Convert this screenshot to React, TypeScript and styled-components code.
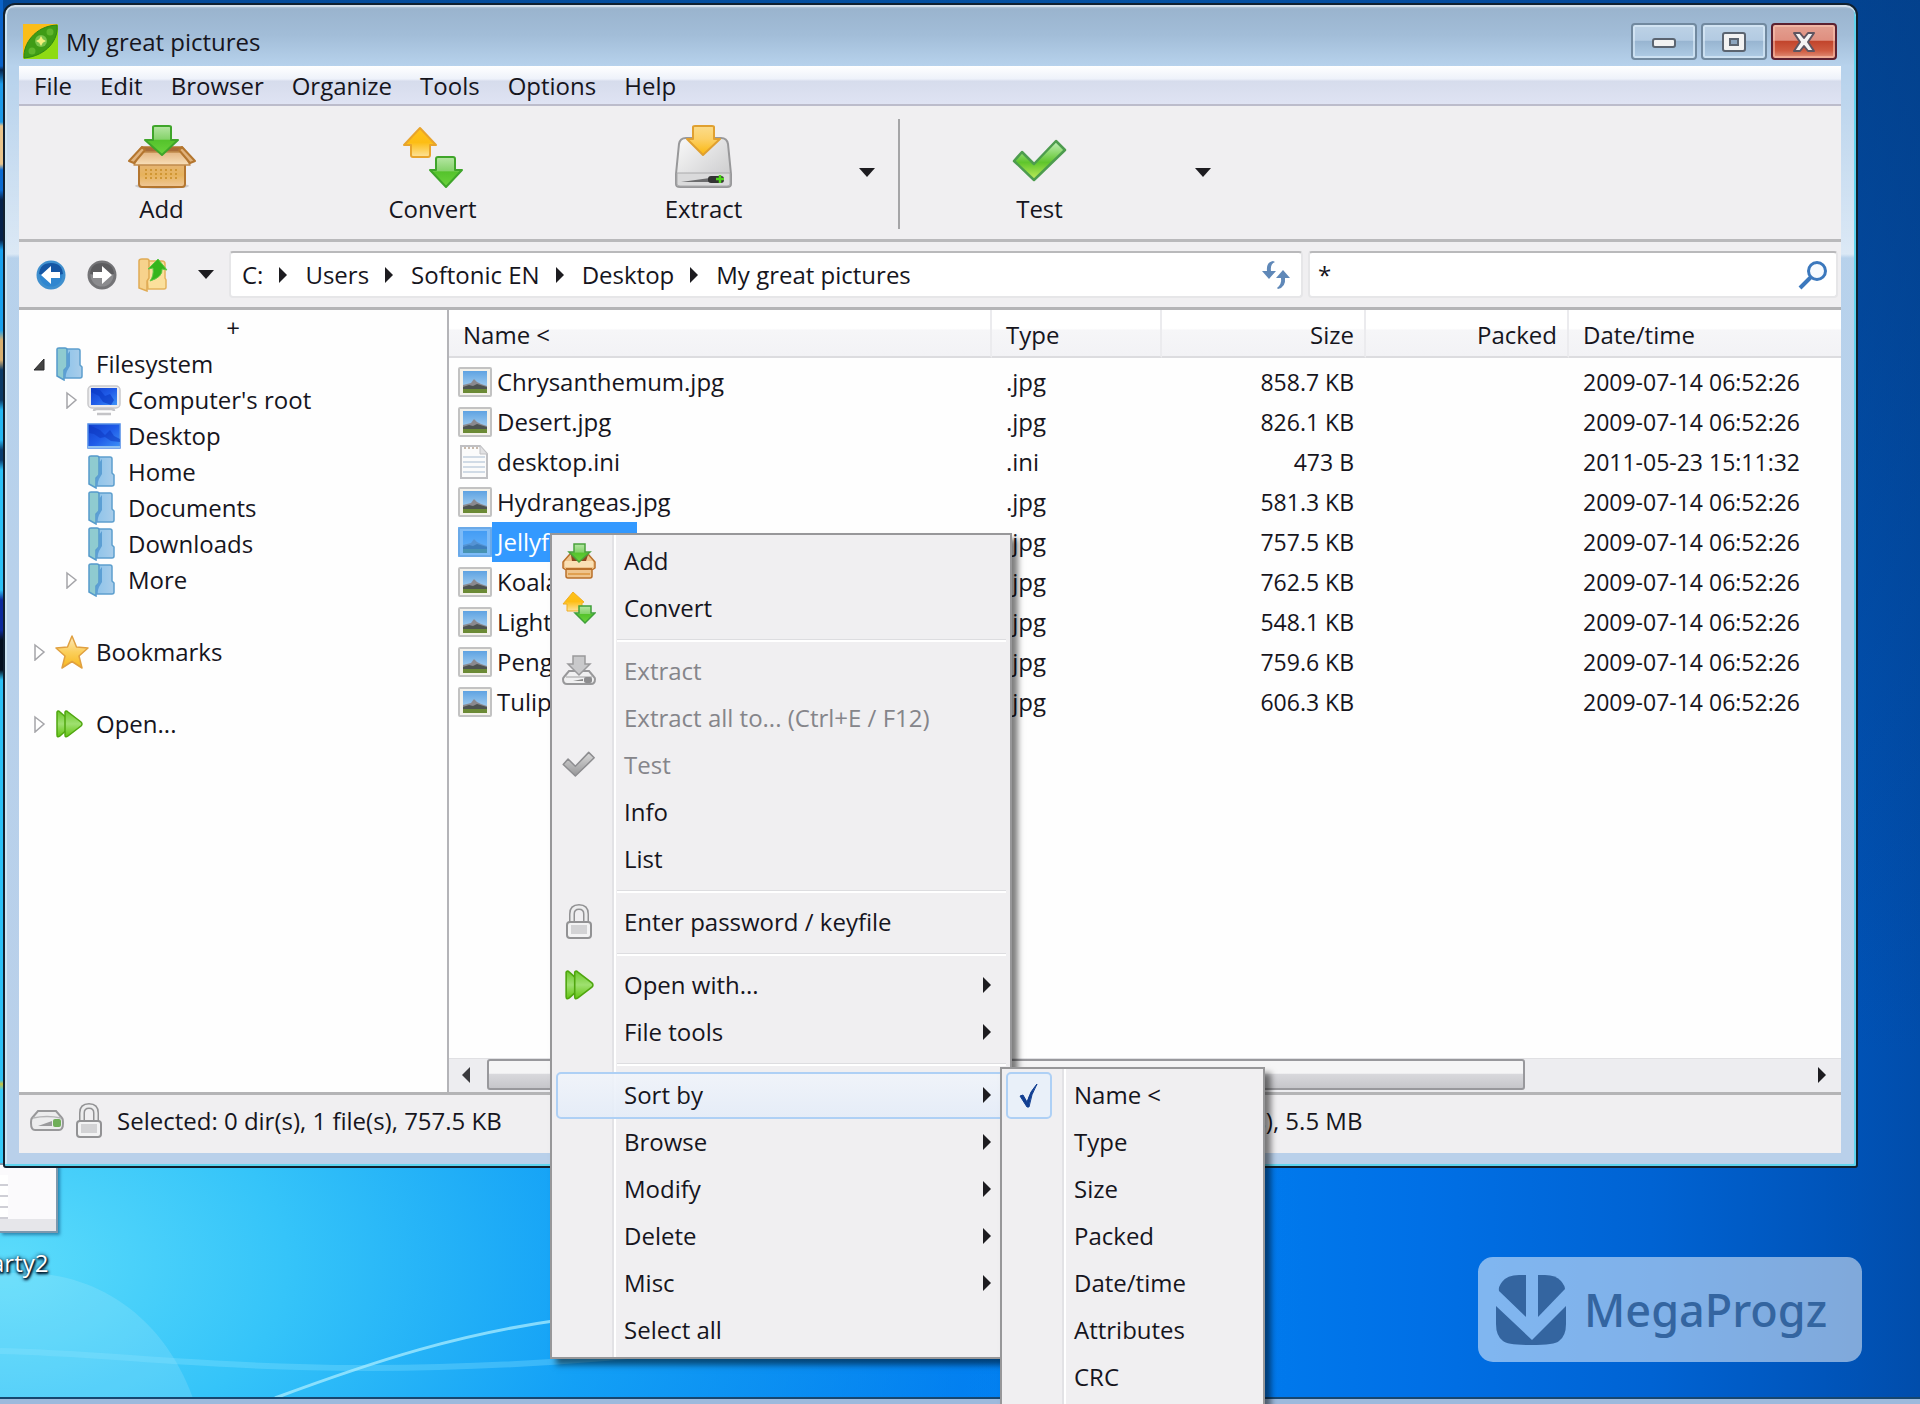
import React from "react";
import styled, { createGlobalStyle, css } from "styled-components";

const GlobalStyle = createGlobalStyle`
  * { box-sizing: border-box; }
  body { margin: 0; }
  body, button, input, table {
    font-family: "Open Sans", "Noto Sans", sans-serif;
    font-size: 24px;
    line-height: 32px;
    color: #16151d;
  }
  button {
    border: 0;
    padding: 0;
    background: none;
    text-align: left;
    white-space: nowrap;
  }
  svg { display: block; flex: none; }
`;

/* ---------- desktop ---------- */

const Desktop = styled.div`
  position: relative;
  display: flex;
  flex-direction: column;
  height: 100vh;
  padding: 3px 62px 236px 3px;
  overflow: hidden;
  background:
    radial-gradient(ellipse 68% 60% at 0% 90%, #5cdcfb 0%, #35c4f9 22%, rgba(22, 168, 250, 0.85) 46%, rgba(4, 132, 244, 0.5) 75%, rgba(0, 110, 230, 0) 100%),
    linear-gradient(90deg, #0568cf 0%, #0080f2 60%, #0070e6 74%, #0063d3 86%, #0055bb 95%, #014dab 100%);
`;

const TopShade = styled.div`
  position: absolute;
  inset: 0 0 auto 0;
  height: 75%;
  background: linear-gradient(180deg, rgba(4, 60, 128, 0.7), rgba(4, 60, 128, 0));
`;

const EdgeStrip = styled.div`
  position: absolute;
  left: 0;
  top: 0;
  width: 3px;
  height: 1168px;
  background: linear-gradient(
    180deg,
    #0a62c8 0 66px, #06264f 70px, #1d9ae8 84px 122px, #e9c58c 126px 164px,
    #0a6ad0 170px 190px, #06224a 200px 240px, #18a0ee 250px 330px, #d9b070 340px 360px,
    #0c3a66 370px 400px, #25b6f2 410px 440px, #0a3d70 450px 460px, #2cc0f6 470px 590px,
    #0c2a9c 600px 630px, #04101f 640px 670px, #2cc0f6 680px 1080px, #c9c33c 1084px, #35caf8 1090px
  );
`;

const Aurora = styled.svg`
  position: absolute;
  left: 0;
  bottom: 0;
`;

const Thumbnail = styled.div`
  position: absolute;
  left: 0;
  bottom: 171px;
  width: 58px;
  height: 70px;
  border: 2px solid #7d98ad;
  border-left: 0;
  background:
    linear-gradient(#e6e6ea, #e6e6ea) 0 100% / 100% 12px no-repeat,
    repeating-linear-gradient(180deg, #ffffff 0 9px, #cfcfd6 9px 11px) 0 10px / 8px 44px no-repeat,
    #fbfafc;
  box-shadow: 2px 2px 3px rgba(0, 60, 110, 0.5);
`;

const ThumbnailLabel = styled.div`
  position: absolute;
  left: -9px;
  bottom: 125px;
  color: #fff;
  text-shadow: 1px 2px 3px #001830, 0 0 4px #00264a, 1px 1px 2px #000;
`;

const Taskbar = styled.div`
  position: absolute;
  left: 0;
  right: 0;
  bottom: 0;
  height: 7px;
  border-top: 2px solid #16466f;
  background: #9db9dc;
`;

/* ---------- window chrome ---------- */

const Window = styled.main`
  position: relative;
  display: flex;
  flex-direction: column;
  flex: 1;
  min-height: 0;
  padding: 0 15px 13px 14px;
  border: 2px solid #10202f;
  border-radius: 12px 12px 3px 3px;
  background:
    linear-gradient(180deg, rgba(255, 255, 255, 0) 66px, rgba(255, 255, 255, 0.5) 249px, rgba(255, 255, 255, 0) 253px),
    linear-gradient(180deg, #c3d3e2 0, #9ab4ce 4px, #a2bdd8 30px, #b7d2ec 61px, #b9d0ea 100%);
  box-shadow: inset 0 2px 0 #d3e0ec, inset -2px -2px 0 #5fd4ee, inset 2px 0 0 #cfe6f4;
`;

const TitleBar = styled.header`
  display: flex;
  align-items: center;
  height: 61px;
  padding: 12px 4px 0;
  gap: 8px;
`;

const Title = styled.h1`
  flex: 1;
  margin: 0;
  font-size: 24px;
  font-weight: 400;
`;

const Controls = styled.div`
  display: flex;
  align-items: center;
  gap: 4px;
`;

const ControlButton = styled.button<{ $close?: boolean }>`
  display: flex;
  align-items: center;
  justify-content: center;
  width: 66px;
  height: 37px;
  border: 2px solid ${(p) => (p.$close ? "#5c2130" : "#71899f")};
  border-radius: 4px;
  background: ${(p) =>
    p.$close
      ? "linear-gradient(180deg, #e3a091 0, #df8f80 46%, #c2452c 50%, #cf5c42 78%, #e2917a 100%)"
      : "linear-gradient(180deg, #bdd2e6 0, #b3cbe2 46%, #98b5d1 50%, #b0cde6 100%)"};
  box-shadow: inset 0 0 0 2px ${(p) => (p.$close ? "rgba(255,205,185,.5)" : "rgba(225,240,252,.6)")};
`;

const Client = styled.div`
  display: flex;
  flex-direction: column;
  flex: 1;
  min-height: 0;
  background: #f0eff1;
`;

const MenuBar = styled.nav`
  display: flex;
  flex: none;
  height: 40px;
  padding-left: 1px;
  border-bottom: 2px solid #bcbccb;
  background: linear-gradient(180deg, #ffffff 0, #eef2fa 34%, #d6dcec 40%, #dfe3f3 100%);
`;

const MenuBarItem = styled.button`
  padding: 2px 14px 0;
`;

const ToolBar = styled.div`
  display: flex;
  flex: none;
  height: 136px;
  padding-left: 7px;
  border-bottom: 3px solid #b9b9bb;
`;

const ToolButton = styled.button`
  display: flex;
  flex-direction: column;
  align-items: center;
  width: 271px;
  padding-top: 19px;
  gap: 4px;
`;

const DropButton = styled.button<{ $wide?: boolean }>`
  display: flex;
  align-items: center;
  justify-content: center;
  width: ${(p) => (p.$wide ? "56px" : "34px")};
  margin-right: ${(p) => (p.$wide ? "0" : "6px")};
`;

const ToolDivider = styled.div`
  width: 2px;
  height: 110px;
  margin: 13px 4px 0 3px;
  background: #a5a5a7;
`;

const AddressRow = styled.div`
  display: flex;
  flex: none;
  align-items: center;
  height: 68px;
  padding: 0 3px 0 17px;
  border-bottom: 3px solid #b4b4b6;
`;

const NavButton = styled.button`
  width: 51px;
`;

const field = css`
  display: flex;
  align-items: center;
  height: 47px;
  border: 2px solid #e6e6e8;
  border-top-color: #b9b9bb;
  border-radius: 4px;
  background: #fff;
`;

const Breadcrumb = styled.div`
  ${field}
  flex: 1;
  padding: 0 10px 0 11px;
`;

const Crumb = styled.button`
  display: flex;
  align-items: center;
  gap: 15px;
  margin-right: 17px;
`;

const RefreshButton = styled.button`
  margin-left: auto;
`;

const SearchBox = styled.form`
  ${field}
  width: 530px;
  margin-left: 5px;
  padding: 0 8px;
`;

const SearchInput = styled.input`
  flex: 1;
  min-width: 0;
  border: 0;
  padding: 0;
  outline: 0;
  background: none;
`;

/* ---------- panes ---------- */

const Panes = styled.div`
  display: flex;
  flex: 1;
  min-height: 0;
  background: #fefefe;
`;

const Sidebar = styled.aside`
  flex: none;
  width: 430px;
  padding-top: 2px;
  border-right: 2px solid #b4b4b8;
`;

const AddTab = styled.button`
  display: block;
  width: 100%;
  text-align: center;
`;

const Tree = styled.ul`
  margin: 0;
  padding: 2px 0 0;
  list-style: none;
`;

const TreeRow = styled.li<{ $level: number; $gap?: boolean }>`
  display: grid;
  grid-template-columns: 23px 41px 1fr;
  align-items: center;
  height: 36px;
  margin-top: ${(p) => (p.$gap ? "36px" : "0")};
  padding-left: ${(p) => (p.$level ? "45px" : "13px")};
`;

const FilePane = styled.section`
  display: flex;
  flex-direction: column;
  flex: 1;
  min-width: 0;
`;

const FileTable = styled.table`
  width: 100%;
  table-layout: fixed;
  border-collapse: separate;
  border-spacing: 0;
  tbody::before {
    content: "";
    display: block;
    height: 4px;
  }
`;

const Head = styled.th<{ $w?: number; $right?: boolean }>`
  width: ${(p) => (p.$w ? `${p.$w}px` : "auto")};
  height: 48px;
  padding: 3px ${(p) => (p.$right ? "10px" : "0")} 0 14px;
  border-right: 2px solid #ebebee;
  border-bottom: 2px solid #dcdcdf;
  background: linear-gradient(180deg, #ffffff 0 40%, #f6f6f8 44%, #f2f2f5 100%);
  font-weight: 400;
  text-align: ${(p) => (p.$right ? "right" : "left")};
  &:last-child { border-right: 0; }
`;

const Cell = styled.td<{ $right?: boolean; $name?: boolean; $num?: boolean }>`
  height: 40px;
  padding: 0 ${(p) => (p.$right ? "12px" : "0")} 0 ${(p) => (p.$name ? "9px" : "14px")};
  font-size: ${(p) => (p.$num ? "23px" : "24px")};
  text-align: ${(p) => (p.$right ? "right" : "left")};
  white-space: nowrap;
`;

const FileName = styled.div`
  display: flex;
  align-items: center;
`;

const FileLabel = styled.span<{ $selected?: boolean }>`
  padding: 0 16px 0 5px;
  line-height: 40px;
  color: ${(p) => (p.$selected ? "#fff" : "inherit")};
  background: ${(p) => (p.$selected ? "#3399ff" : "none")};
`;

const ScrollBar = styled.div`
  display: flex;
  align-items: flex-start;
  height: 34px;
  margin-top: auto;
  padding: 0 14px 0 12px;
  border-top: 1px solid #e0e0e3;
  background: #ededf0;
  svg { margin-top: 8px; }
`;

const Track = styled.div`
  flex: 1;
  height: 31px;
  margin: 0 16px;
`;

const Thumb = styled.div`
  width: 79%;
  height: 31px;
  border: 2px solid #98989c;
  border-radius: 3px;
  background: linear-gradient(180deg, #f5f5f6 0 45%, #d8d8dc 50%, #c6c6ca 100%);
`;

const StatusBar = styled.footer`
  display: flex;
  flex: none;
  align-items: center;
  height: 61px;
  padding: 0 0 6px 11px;
  border-top: 3px solid #b4b4b6;
`;

const StatusIcons = styled.div`
  display: flex;
  align-items: center;
  gap: 11px;
  width: 87px;
`;

const StatusText = styled.span<{ $w?: number }>`
  flex: none;
  width: ${(p) => (p.$w ? `${p.$w}px` : "auto")};
`;

/* ---------- popup menus ---------- */

const Popup = styled.div<{ $x: number; $y: number; $w: number }>`
  position: absolute;
  left: ${(p) => p.$x}px;
  top: ${(p) => p.$y}px;
  width: ${(p) => p.$w}px;
  padding: 3px 4px;
  border: 2px solid #979799;
  background: linear-gradient(90deg, transparent 60px, #e2e2e5 60px 62px, #fff 62px 64px, transparent 64px), #f0eff1;
  box-shadow: 6px 6px 6px rgba(0, 0, 0, 0.5);
`;

const MenuItem = styled.button<{ $active?: boolean }>`
  display: grid;
  grid-template-columns: 66px 1fr 22px;
  align-items: center;
  width: 100%;
  height: 47px;
  padding-bottom: 2px;
  border: 2px solid ${(p) => (p.$active ? "#aed0f5" : "transparent")};
  border-radius: 5px;
  background: ${(p) => (p.$active ? "linear-gradient(180deg, rgba(240,244,250,.9), rgba(228,236,248,.9))" : "none")};
  &:disabled { color: #85858a; }
`;

const MenuIcon = styled.span`
  display: flex;
  justify-content: center;
  width: 42px;
`;

const Checked = styled.span`
  display: flex;
  align-items: center;
  justify-content: center;
  width: 46px;
  height: 47px;
  margin: -2px 0 -4px -2px;
  border: 2px solid #aed0f5;
  border-radius: 5px;
  background: #e9f0f9;
`;

const MenuRule = styled.hr`
  height: 3px;
  margin: 7px 0 6px 61px;
  border: 0;
  border-top: 1px solid #dddde0;
  border-bottom: 2px solid #fff;
`;

/* ---------- watermark ---------- */

const Watermark = styled.div`
  position: absolute;
  right: 58px;
  bottom: 42px;
  display: flex;
  align-items: center;
  gap: 17px;
  width: 384px;
  height: 105px;
  padding: 0 17px;
  border-radius: 15px;
  background: rgba(255, 255, 255, 0.5);
  color: #3465a0;
  font-family: "Noto Sans", "Open Sans", sans-serif;
  font-size: 45px;
  font-weight: 500;
`;

/* ---------- drawings ---------- */

const Defs = () => (
  <svg width="0" height="0" style={{ position: "absolute" }} aria-hidden="true">
    <defs>
      <linearGradient id="green" x1="0" y1="0" x2="0" y2="1">
        <stop offset="0" stopColor="#b6e6a4" /><stop offset=".45" stopColor="#86d36c" /><stop offset=".5" stopColor="#55c32c" /><stop offset="1" stopColor="#6bd33c" />
      </linearGradient>
      <linearGradient id="gold" x1="0" y1="0" x2="0" y2="1">
        <stop offset="0" stopColor="#ffc21a" /><stop offset=".5" stopColor="#fdbd14" /><stop offset="1" stopColor="#fde39c" />
      </linearGradient>
      <linearGradient id="goldDown" x1="0" y1="0" x2="0" y2="1">
        <stop offset="0" stopColor="#fbdc8c" /><stop offset=".45" stopColor="#fcd066" /><stop offset="1" stopColor="#fbb70c" />
      </linearGradient>
      <linearGradient id="carton" x1="0" y1="0" x2="0" y2="1">
        <stop offset="0" stopColor="#e6b676" /><stop offset=".5" stopColor="#e6b25c" /><stop offset="1" stopColor="#f0c898" />
      </linearGradient>
      <linearGradient id="flap" x1="0" y1="0" x2="0" y2="1">
        <stop offset="0" stopColor="#e3b684" /><stop offset="1" stopColor="#f8dfb8" />
      </linearGradient>
      <linearGradient id="drive" x1="0" y1="0" x2="1" y2="1">
        <stop offset="0" stopColor="#fafafa" /><stop offset="1" stopColor="#c6c6c8" />
      </linearGradient>
      <linearGradient id="tick" x1="0" y1="0" x2="0" y2="1">
        <stop offset="0" stopColor="#c4f0bc" /><stop offset=".55" stopColor="#5fc52c" /><stop offset="1" stopColor="#c4ee5c" />
      </linearGradient>
      <linearGradient id="tickGrey" x1="0" y1="0" x2="0" y2="1">
        <stop offset="0" stopColor="#dadada" /><stop offset="1" stopColor="#969698" />
      </linearGradient>
      <linearGradient id="sky" x1="0" y1="0" x2="0" y2="1">
        <stop offset="0" stopColor="#5fa3e2" /><stop offset="1" stopColor="#b8dbf3" />
      </linearGradient>
      <linearGradient id="glass" x1="0" y1="0" x2="1" y2="0">
        <stop offset="0" stopColor="#8cc3ea" /><stop offset="1" stopColor="#a9cdea" />
      </linearGradient>
      <linearGradient id="screen" x1="0" y1="0" x2="1" y2="1">
        <stop offset="0" stopColor="#1240cc" /><stop offset=".5" stopColor="#1f5be8" /><stop offset="1" stopColor="#3f93f8" />
      </linearGradient>
      <linearGradient id="star" x1="0" y1="0" x2="0" y2="1">
        <stop offset="0" stopColor="#fdeac0" /><stop offset=".5" stopColor="#fbcf5c" /><stop offset="1" stopColor="#f8b81c" />
      </linearGradient>
      <linearGradient id="play" x1="0" y1="0" x2="0" y2="1">
        <stop offset="0" stopColor="#6cc82c" /><stop offset=".5" stopColor="#9fe070" /><stop offset="1" stopColor="#62c410" />
      </linearGradient>
    </defs>
  </svg>
);

const AppIcon = () => (
  <svg width="35" height="35" viewBox="0 0 35 35">
    <path d="M0 0h35L0 35z" fill="#fbbd1a" /><path d="M35 0v35H0z" fill="#8edb14" />
    <path d="M1 34C0 20 12 2 34 1c2 14-10 31-33 33z" fill="#3f9c16" stroke="#2f8612" strokeWidth="1" />
    <circle cx="18" cy="17" r="6" fill="#77c24a" /><circle cx="27" cy="8" r="3.5" fill="#5fb52c" /><circle cx="9" cy="27" r="3.5" fill="#5fb52c" />
    <path d="M18 12l1.800 3.200L23 17l-3.200 1.800L18 22l-1.800-3.200L13 17l3.200-1.800z" fill="#f3ef7a" />
  </svg>
);

const AddIcon = () => (
  <svg width="68" height="64" viewBox="0 0 68 64">
    <ellipse cx="34" cy="61" rx="27" ry="3" fill="#00000026" />
    <path d="M11 38h46v21q0 3-3 3H14q-3 0-3-3z" fill="url(#carton)" stroke="#b4762f" strokeWidth="2" />
    <path d="M17 45h35M17 49h35M17 53h35" stroke="#d09634" strokeWidth="2" strokeDasharray="2 3" />
    <path d="M14 22h40l5 6H9z" fill="#a86c38" stroke="#b4762f" strokeWidth="1.500" />
    <path d="M13 27h42l7 13H6z" fill="url(#flap)" stroke="#c08a4c" strokeWidth="1.500" strokeLinejoin="round" />
    <path d="M14 22L1 36l5 2 11-13zM54 22l13 14-5 2-11-13z" fill="#e0b27c" stroke="#b4762f" strokeWidth="2" strokeLinejoin="round" />
    <path d="M25 2q0-1 2-1h14q2 0 2 1v13h7L34 30 17 15h8z" fill="url(#green)" stroke="#3fa52a" strokeWidth="2" strokeLinejoin="round" />
  </svg>
);

const ConvertIcon = () => (
  <svg width="60" height="64" viewBox="0 0 60 64">
    <path d="M17 3l16 17h-6v10q0 2-2 2H10q-2 0-2-2V20H1z" fill="url(#gold)" stroke="#e8a42c" strokeWidth="2" strokeLinejoin="round" />
    <path d="M33 34q0-2 2-2h15q2 0 2 2v11h7L43 62 27 45h6z" fill="url(#green)" stroke="#3fa52a" strokeWidth="2" strokeLinejoin="round" />
  </svg>
);

const ExtractIcon = () => (
  <svg width="57" height="64" viewBox="0 0 57 64">
    <path d="M4 19q1-6 7-6h35q6 0 7 6l3 30v10q0 3-4 3H5q-4 0-4-3V49z" fill="url(#drive)" stroke="#98989a" strokeWidth="2" />
    <path d="M2 48h53v11q0 2-3 2H5q-3 0-3-2z" fill="#dadadb" stroke="#aaaaac" strokeWidth="1" />
    <path d="M6 57h36v-5z" fill="#6c6c6e" /><rect x="33" y="51" width="16" height="7" rx="3" fill="#333" />
    <path d="M45 50v8M41 54h8" stroke="#4fd61c" strokeWidth="2.500" />
    <path d="M18 2q0-1 2-1h17q2 0 2 1v12h6L28 30 12 14h6z" fill="url(#goldDown)" stroke="#e0a030" strokeWidth="2" strokeLinejoin="round" />
  </svg>
);

const TestIcon = ({ width = 56, height = 64, grey = false }: { width?: number; height?: number; grey?: boolean }) => (
  <svg width={width} height={height} viewBox={grey ? "0 14 56 44" : "0 0 56 64"}>
    <path d="M2 36l8-9 12 12 22-23 9 9-31 30z" fill={grey ? "url(#tickGrey)" : "url(#tick)"} stroke={grey ? "#8d8d90" : "#4d9c4e"} strokeWidth="2.500" strokeLinejoin="round" />
  </svg>
);

const SmallAdd = () => (
  <svg width="34" height="36" viewBox="0 0 34 36">
    <path d="M1 19L8 11h18l7 8v6l-3 2v6q0 2-2 2H6q-2 0-2-2v-6l-3-2z" fill="#efc48c" stroke="#b9702a" strokeWidth="1.500" strokeLinejoin="round" />
    <path d="M9 12h17l-2 6H10z" fill="#8a4820" />
    <path d="M3 18h28v6H3z" fill="#fae0b4" />
    <path d="M4 26h26" stroke="#b9702a" strokeWidth="2" /><path d="M6 31h22" stroke="#e0a050" strokeWidth="2" />
    <path d="M12 1h11v8h5L17 19 7 9h5z" fill="url(#green)" stroke="#4aa23c" strokeWidth="1.500" />
  </svg>
);

const SmallConvert = () => (
  <svg width="34" height="34" viewBox="0 0 34 34">
    <path d="M11 1l11 10-2 1v8H5v-7H1z" fill="url(#gold)" stroke="#f0ad22" />
    <path d="M17 15h12v7h4L23 32 13 22h4z" fill="url(#green)" stroke="#3fa03a" strokeWidth="1.500" />
  </svg>
);

const SmallExtract = () => (
  <svg width="34" height="31" viewBox="0 0 34 31">
    <path d="M7 16h20l5 6q1 1 1 2 0 5-4 5H5q-4 0-4-5 0-1 1-2z" fill="#f0f0f1" stroke="#98989a" strokeWidth="2" />
    <path d="M4 22h26" stroke="#bbb" strokeWidth="1.500" /><path d="M11 26h10v-2z" fill="#888" /><rect x="22" y="22" width="8" height="6" rx="2" fill="#8c8c8e" />
    <path d="M11 1h12v8h5L17 20 6 9h5z" fill="#c9c9cb" stroke="#9a9a9c" strokeWidth="1.500" />
  </svg>
);

const DriveIcon = () => (
  <svg width="34" height="22" viewBox="0 0 34 22">
    <path d="M8 1h18l6 7q1 1 1 5 0 7-4 7H5q-4 0-4-7 0-4 1-5z" fill="#ececed" stroke="#98989a" strokeWidth="2" />
    <path d="M3 8q14-3 28 0" stroke="#b4b4b6" strokeWidth="1.500" fill="none" /><path d="M8 16h14v-5z" fill="#9a9a9c" />
    <rect x="23" y="9" width="8" height="8" rx="2" fill="#6fae58" />
  </svg>
);

const LockIcon = () => (
  <svg width="28" height="36" viewBox="0 0 28 36">
    <path d="M7 18V10q0-7 7-7t7 7v8" fill="none" stroke="#929294" strokeWidth="6" />
    <path d="M7 18V10q0-7 7-7t7 7v8" fill="none" stroke="#ededee" strokeWidth="3" />
    <rect x="2" y="18" width="24" height="16" rx="3" fill="#f3f3f4" stroke="#929294" strokeWidth="2" />
    <rect x="6" y="21" width="16" height="9" fill="#d3d3d5" />
  </svg>
);

const ForwardGreen = ({ size = 28 }: { size?: number }) => (
  <svg width={size} height={size} viewBox="0 0 28 28">
    <path d="M2 2q1-2 3 0l11 10q2 2 0 4L5 26q-3 2-3-1z" fill="url(#play)" stroke="#4fa60f" strokeWidth="1.500" />
    <path d="M10 2q1-2 3 0l13 10q2 2 0 4L13 26q-3 2-3-1z" fill="url(#play)" stroke="#4fa60f" strokeWidth="1.500" />
  </svg>
);

const FolderGlass = () => (
  <svg width="28" height="34" viewBox="0 0 28 34">
    <path d="M8 2h15q2 0 2 2v14l2 2v9q0 2-2 2H10z" fill="url(#glass)" stroke="#5d9fce" strokeWidth="1.500" />
    <path d="M2 2q0-1 2-1h6q2 0 2 2v17l-3 3v10l-7-4z" fill="#8fcbd0" stroke="#569bcb" strokeWidth="1.500" />
    <path d="M12 8l3-4v15l-3 5-3 9v-9l3-6z" fill="#5c9fd4" />
  </svg>
);

const ComputerIcon = () => (
  <svg width="34" height="31" viewBox="0 0 34 31">
    <rect x="1" y="1" width="32" height="22" rx="4" fill="#ececee" stroke="#c9c9cc" strokeWidth="1.500" />
    <rect x="4" y="3" width="26" height="17" fill="url(#screen)" /><path d="M4 3l9 2 5 6 5-2 4 6-3 5-8-3-4-6-8-4z" fill="#0c3cc8" opacity=".7" />
    <path d="M7 26q0-2 3-2h14q3 0 3 2M10 29h14" stroke="#c4c4c7" strokeWidth="2.500" fill="none" />
  </svg>
);

const DesktopIcon = () => (
  <svg width="34" height="26" viewBox="0 0 34 26">
    <rect x="1" y="1" width="32" height="24" fill="url(#screen)" stroke="#4f8be6" strokeWidth="1.500" />
    <path d="M2 2l11 5 5 5 5-5 4 6 6 3v3l-9-1-6-4-5 1-6-4-5-1z" fill="#0c36c0" opacity=".55" /><path d="M1 23h32v2H1z" fill="#8fc0f2" />
  </svg>
);

const StarIcon = () => (
  <svg width="34" height="34" viewBox="0 0 34 34">
    <path d="M17 1l4.500 11 11.500 1-9 8 3 12-10-6.500L7 33l3-12-9-8 11.500-1z" fill="url(#star)" stroke="#e0a040" strokeWidth="1.500" strokeLinejoin="round" />
  </svg>
);

const Expander = ({ open }: { open?: boolean }) => (
  <svg width="14" height="18" viewBox="0 0 14 18">
    {open ? <path d="M12 4v11H2z" fill="#444" stroke="#2a2a2c" /> : <path d="M3 2l9 7-9 8z" fill="#fff" stroke="#a5a5a9" strokeWidth="1.500" />}
  </svg>
);

const RoundArrow = ({ grey }: { grey?: boolean }) => (
  <svg width="30" height="32" viewBox="0 0 30 32">
    <circle cx="15" cy="16" r="13" fill={grey ? "#8b8b8e" : "#2f86d0"} stroke={grey ? "#747477" : "#3f8fce"} strokeWidth="3" />
    <path d="M3 15Q4 4 15 4t12 11q-12 3-24 0z" fill={grey ? "#5c5c5f" : "#1556a4"} />
    <path d={grey ? "M6 13h9V7l10 9-10 9v-6H6z" : "M24 13h-9V7L5 16l10 9v-6h9z"} fill="#fff" />
  </svg>
);

const FolderUp = () => (
  <svg width="30" height="34" viewBox="0 0 30 34">
    <path d="M8 3h16q3 0 3 3v14l1 2v7q0 2-2 2H10z" fill="#fbe09c" stroke="#e4b25c" strokeWidth="1.500" />
    <path d="M1 3q0-2 3-2h5q2 0 2 2v17l-2 3v10l-8-3z" fill="#f7d28c" stroke="#e0ab54" strokeWidth="1.500" />
    <path d="M20 1l9 11-5-1q1 8-12 12 4-5 3-13l-5 1z" fill="#36b51c" stroke="#5cc744" />
  </svg>
);

const Down = () => <svg width="16" height="10" viewBox="0 0 16 10"><path d="M0 0h16L8 9z" fill="#1d1c20" /></svg>;
const Right = () => <svg width="10" height="16" viewBox="0 0 10 16"><path d="M1 0v16l8-8z" fill="#1d1c20" /></svg>;
const Left = () => <svg width="10" height="16" viewBox="0 0 10 16"><path d="M9 0v16L1 8z" fill="#3a3a3e" /></svg>;

const Refresh = () => (
  <svg width="30" height="30" viewBox="0 0 30 30">
    <path d="M12 1Q5 2 6 11H1l7 8 7-8h-5q-1-7 4-9z" fill="#5f88b8" /><path d="M17 29q8-2 7-11h5l-7-8-7 8h5q1 6-4 10z" fill="#5f88b8" />
  </svg>
);

const Magnifier = () => (
  <svg width="30" height="30" viewBox="0 0 30 30">
    <circle cx="19" cy="11" r="8.500" fill="#f6fafe" stroke="#3b78bd" strokeWidth="3" /><path d="M13 17L2 28" stroke="#3b78bd" strokeWidth="4" />
  </svg>
);

const PictureIcon = ({ selected }: { selected?: boolean }) => (
  <svg width="34" height="30" viewBox="0 0 34 30">
    <rect x="1" y="1" width="32" height="28" rx="1" fill="#f3f1ea" stroke="#c2c2c2" strokeWidth="2" />
    <rect x="5" y="4" width="24" height="22" fill="url(#sky)" />
    <path d="M5 18l4-1 4-1 3-4 3 3 4 2 6 2v4H5z" fill="#8a898e" /><path d="M5 20l6-2 4 1 4-2 10 3v3H5z" fill="#4d5350" /><path d="M5 22h24v4H5z" fill="#6b8a35" />
    {selected && <rect width="34" height="30" fill="#3399ff" opacity=".62" />}
  </svg>
);

const IniIcon = () => (
  <svg width="34" height="34" viewBox="0 0 34 34">
    <path d="M3 1h19l7 8v24H3z" fill="#fbfbfb" stroke="#c0c0c3" strokeWidth="2" />
    <path d="M22 1v8h7" fill="#e2e2e4" stroke="#c0c0c3" /><path d="M6 3h14" stroke="#c7b9ac" strokeWidth="2" strokeDasharray="2 2" />
    <path d="M5 12h22M5 17h22M5 22h22M5 27h22" stroke="#c4d1df" strokeWidth="1.500" />
  </svg>
);

const Logo = () => (
  <svg width="72" height="72" viewBox="0 0 72 72" fill="#3465a0">
    <path d="M31 1v42L4 17Q3 13 7 8 12 1 24 1z" /><path d="M43 1v42l27-28q0-3-4-8-5-6-16-6z" />
    <path d="M1 32l36 34 34-34v18q0 12-7 17-4 4-28 4T8 67Q1 62 1 50z" />
  </svg>
);

const CheckMark = () => (
  <svg width="20" height="26" viewBox="0 0 20 26"><path d="M1 13l3-1 4 7Q11 8 18 1q-6 10-8 23H8z" fill="#123f92" stroke="#123f92" /></svg>
);

const MinGlyph = () => <svg width="24" height="12" viewBox="0 0 24 12"><rect x="1" y="3" width="22" height="8" rx="2" fill="#f2f2f2" stroke="#5b6470" strokeWidth="2" /></svg>;
const MaxGlyph = () => (
  <svg width="24" height="20" viewBox="0 0 24 20"><rect x="1" y="1" width="22" height="18" rx="2" fill="#f2f2f2" stroke="#5b6470" strokeWidth="2" /><rect x="8" y="7" width="8" height="6" fill="#8ba4bd" stroke="#5b6470" strokeWidth="2" /></svg>
);
const CloseGlyph = () => (
  <svg width="24" height="20" viewBox="0 0 24 20"><path d="M2 1h6l4 5 4-5h6l-6 9 6 9h-6l-4-5-4 5H2l6-9z" fill="#f4f4f4" stroke="#5f5560" strokeWidth="2" strokeLinejoin="round" /></svg>
);

/* ---------- data ---------- */

const menus = ["File", "Edit", "Browser", "Organize", "Tools", "Options", "Help"];
const crumbs = ["C:", "Users", "Softonic EN", "Desktop", "My great pictures"];

const tree = [
  { label: "Filesystem", level: 0, icon: <FolderGlass />, expander: "open" },
  { label: "Computer's root", level: 1, icon: <ComputerIcon />, expander: "closed" },
  { label: "Desktop", level: 1, icon: <DesktopIcon /> },
  { label: "Home", level: 1, icon: <FolderGlass /> },
  { label: "Documents", level: 1, icon: <FolderGlass /> },
  { label: "Downloads", level: 1, icon: <FolderGlass /> },
  { label: "More", level: 1, icon: <FolderGlass />, expander: "closed" },
  { label: "Bookmarks", level: 0, icon: <StarIcon />, expander: "closed", gap: true },
  { label: "Open...", level: 0, icon: <ForwardGreen />, expander: "closed", gap: true },
];

const files = [
  ["Chrysanthemum.jpg", ".jpg", "858.7 KB", "2009-07-14 06:52:26"],
  ["Desert.jpg", ".jpg", "826.1 KB", "2009-07-14 06:52:26"],
  ["desktop.ini", ".ini", "473 B", "2011-05-23 15:11:32"],
  ["Hydrangeas.jpg", ".jpg", "581.3 KB", "2009-07-14 06:52:26"],
  ["Jellyfish.jpg", ".jpg", "757.5 KB", "2009-07-14 06:52:26"],
  ["Koala.jpg", ".jpg", "762.5 KB", "2009-07-14 06:52:26"],
  ["Lighthouse.jpg", ".jpg", "548.1 KB", "2009-07-14 06:52:26"],
  ["Penguins.jpg", ".jpg", "759.6 KB", "2009-07-14 06:52:26"],
  ["Tulips.jpg", ".jpg", "606.3 KB", "2009-07-14 06:52:26"],
];

type Entry = { label: string; icon?: React.ReactNode; disabled?: boolean; sub?: boolean; active?: boolean };

const contextGroups: Entry[][] = [
  [{ label: "Add", icon: <SmallAdd /> }, { label: "Convert", icon: <SmallConvert /> }],
  [
    { label: "Extract", icon: <SmallExtract />, disabled: true },
    { label: "Extract all to... (Ctrl+E / F12)", disabled: true },
    { label: "Test", icon: <TestIcon width={34} height={27} grey />, disabled: true },
    { label: "Info" },
    { label: "List" },
  ],
  [{ label: "Enter password / keyfile", icon: <LockIcon /> }],
  [{ label: "Open with...", icon: <ForwardGreen size={30} />, sub: true }, { label: "File tools", sub: true }],
  [
    { label: "Sort by", sub: true, active: true },
    { label: "Browse", sub: true },
    { label: "Modify", sub: true },
    { label: "Delete", sub: true },
    { label: "Misc", sub: true },
    { label: "Select all" },
  ],
];

const sortKeys = ["Name <", "Type", "Size", "Packed", "Date/time", "Attributes", "CRC"];

export default function App() {
  return (
    <Desktop>
      <GlobalStyle />
      <Defs />
      <TopShade />
      <EdgeStrip />
      <Aurora width="700" height="240" viewBox="0 0 700 240" fill="none">
        <path d="M0 110C90 100 165 150 195 240H0z" fill="#fff" opacity=".13" />
        <path d="M0 187C160 190 330 225 700 185" stroke="#8fe6ff" strokeWidth="6" opacity=".3" />
        <path d="M275 234C380 195 460 170 560 156" stroke="#a9ecff" strokeWidth="3" opacity=".75" />
      </Aurora>
      <Thumbnail />
      <ThumbnailLabel>arty2</ThumbnailLabel>
      <Taskbar />

      <Window>
        <TitleBar>
          <AppIcon />
          <Title>My great pictures</Title>
          <Controls>
            <ControlButton aria-label="Minimize"><MinGlyph /></ControlButton>
            <ControlButton aria-label="Maximize"><MaxGlyph /></ControlButton>
            <ControlButton aria-label="Close" $close><CloseGlyph /></ControlButton>
          </Controls>
        </TitleBar>
        <Client>
          <MenuBar>{menus.map((m) => <MenuBarItem key={m}>{m}</MenuBarItem>)}</MenuBar>
          <ToolBar>
            <ToolButton><AddIcon />Add</ToolButton>
            <ToolButton><ConvertIcon />Convert</ToolButton>
            <ToolButton><ExtractIcon />Extract</ToolButton>
            <DropButton $wide aria-label="Extract options"><Down /></DropButton>
            <ToolDivider />
            <ToolButton><TestIcon />Test</ToolButton>
            <DropButton $wide aria-label="Test options"><Down /></DropButton>
          </ToolBar>
          <AddressRow>
            <NavButton aria-label="Back"><RoundArrow /></NavButton>
            <NavButton aria-label="Forward"><RoundArrow grey /></NavButton>
            <NavButton aria-label="Up"><FolderUp /></NavButton>
            <DropButton aria-label="History"><Down /></DropButton>
            <Breadcrumb>
              {crumbs.map((c, i) => (
                <Crumb key={c}>{c}{i < crumbs.length - 1 && <Right />}</Crumb>
              ))}
              <RefreshButton aria-label="Refresh"><Refresh /></RefreshButton>
            </Breadcrumb>
            <SearchBox>
              <SearchInput aria-label="Search" defaultValue="*" />
              <button type="button" aria-label="Find"><Magnifier /></button>
            </SearchBox>
          </AddressRow>

          <Panes>
            <Sidebar>
              <AddTab>+</AddTab>
              <Tree>
                {tree.map((t) => (
                  <TreeRow key={t.label} $level={t.level} $gap={t.gap}>
                    <span>{t.expander && <Expander open={t.expander === "open"} />}</span>
                    {t.icon}
                    <span>{t.label}</span>
                  </TreeRow>
                ))}
              </Tree>
            </Sidebar>
            <FilePane>
              <FileTable>
                <thead>
                  <tr>
                    <Head>Name &lt;</Head>
                    <Head $w={170}>Type</Head>
                    <Head $w={204} $right>Size</Head>
                    <Head $w={203} $right>Packed</Head>
                    <Head $w={272}>Date/time</Head>
                  </tr>
                </thead>
                <tbody>
                  {files.map(([name, type, size, date]) => {
                    const selected = name === "Jellyfish.jpg";
                    return (
                      <tr key={name}>
                        <Cell $name>
                          <FileName>
                            {type === ".ini" ? <IniIcon /> : <PictureIcon selected={selected} />}
                            <FileLabel $selected={selected}>{name}</FileLabel>
                          </FileName>
                        </Cell>
                        <Cell>{type}</Cell>
                        <Cell $right $num>{size}</Cell>
                        <Cell />
                        <Cell $num>{date}</Cell>
                      </tr>
                    );
                  })}
                </tbody>
              </FileTable>
              <ScrollBar>
                <Left />
                <Track><Thumb /></Track>
                <Right />
              </ScrollBar>
            </FilePane>
          </Panes>

          <StatusBar>
            <StatusIcons><DriveIcon /><LockIcon /></StatusIcons>
            <StatusText $w={920}>Selected: 0 dir(s), 1 file(s), 757.5 KB</StatusText>
            <StatusText>Total: 0 dir(s), 9 file(s), 5.5 MB</StatusText>
          </StatusBar>
        </Client>
      </Window>

      <Watermark><Logo />MegaProgz</Watermark>

      <Popup role="menu" $x={550} $y={533} $w={462}>
        {contextGroups.map((group, g) => (
          <React.Fragment key={g}>
            {g > 0 && <MenuRule />}
            {group.map((e) => (
              <MenuItem key={e.label} role="menuitem" disabled={e.disabled} $active={e.active}>
                <MenuIcon>{e.icon}</MenuIcon>
                {e.label}
                {e.sub && <Right />}
              </MenuItem>
            ))}
          </React.Fragment>
        ))}
      </Popup>
      <Popup role="menu" $x={1000} $y={1067} $w={265}>
        {sortKeys.map((k, i) => (
          <MenuItem key={k} role="menuitemradio" aria-checked={i === 0}>
            {i === 0 ? <Checked><CheckMark /></Checked> : <span />}
            {k}
          </MenuItem>
        ))}
      </Popup>
    </Desktop>
  );
}
